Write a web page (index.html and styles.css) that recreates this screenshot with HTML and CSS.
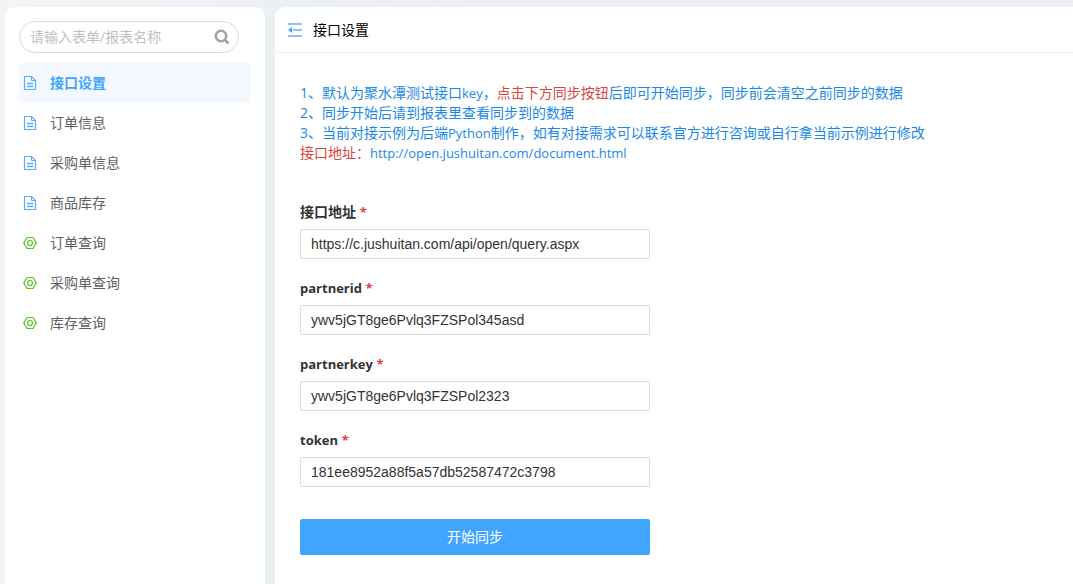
FILE: index.html
```html
<!DOCTYPE html>
<html lang="zh-CN">
  <head>
    <meta charset="UTF-8" />
    <meta name="viewport" content="width=device-width, initial-scale=1.0" />
    <title>接口设置</title>
    <link rel="stylesheet" href="styles.css">
  </head>
  <body>
    <svg class="sprite" aria-hidden="true">
      <symbol id="icon-form" viewBox="0 0 14 16">
        <path d="M1.5 1.5h7l4 4v9h-11z" fill="none" stroke="currentColor" stroke-width="1.2" />
        <path d="M8.5 1.5v4h4" fill="none" stroke="currentColor" />
        <path d="M4 8.5h6M4 11.5h6" stroke="currentColor" stroke-width="1.3" />
      </symbol>
      <symbol id="icon-report" viewBox="0 0 14 16">
        <path d="M4 2.5h6L13.3 8 10 13.5H4L.7 8z" fill="none" stroke="currentColor" stroke-width="1.2" />
        <circle cx="7" cy="8" r="2.5" fill="none" stroke="currentColor" stroke-width="1.2" />
      </symbol>
    </svg>

    <div class="layout">
      <aside class="sidebar">
        <form class="search">
          <input class="searchInput" type="text" placeholder="请输入表单/报表名称" aria-label="请输入表单/报表名称" />
          <button class="searchBtn" type="button" aria-label="搜索">
            <svg width="16" height="16" viewBox="0 0 16 16">
              <circle cx="7" cy="7" r="5.2" fill="none" stroke="currentColor" stroke-width="2.6" />
              <path d="M10.5 10.5l4 4" stroke="currentColor" stroke-width="2.8" />
            </svg>
          </button>
        </form>
        <nav class="menu">
          <a class="item active" href="#"><svg class="icon"><use href="#icon-form" /></svg>接口设置</a>
          <a class="item" href="#"><svg class="icon"><use href="#icon-form" /></svg>订单信息</a>
          <a class="item" href="#"><svg class="icon"><use href="#icon-form" /></svg>采购单信息</a>
          <a class="item" href="#"><svg class="icon"><use href="#icon-form" /></svg>商品库存</a>
          <a class="item report" href="#"><svg class="icon"><use href="#icon-report" /></svg>订单查询</a>
          <a class="item report" href="#"><svg class="icon"><use href="#icon-report" /></svg>采购单查询</a>
          <a class="item report" href="#"><svg class="icon"><use href="#icon-report" /></svg>库存查询</a>
        </nav>
      </aside>

      <main class="content">
        <header class="header">
          <button class="foldBtn" type="button" aria-label="收起菜单">
            <svg width="14" height="14" viewBox="0 0 14 14">
              <path d="M0 1h14M5 7h9M0 13h14" stroke="currentColor" stroke-width="2" />
              <path d="M0 7l4-3v6z" fill="#40a5ff" />
            </svg>
          </button>
          <h1 class="title">接口设置</h1>
        </header>

        <form class="form">
          <div class="tips">
            <p>1、默认为聚水潭测试接口<span class="latin">key</span>，<span class="red">点击下方同步按钮</span>后即可开始同步，同步前会清空之前同步的数据</p>
            <p>2、同步开始后请到报表里查看同步到的数据</p>
            <p>3、当前对接示例为后端<span class="latin">Python</span>制作，如有对接需求可以联系官方进行咨询或自行拿当前示例进行修改</p>
            <p><span class="red">接口地址：</span><a class="latin" href="#">http://open.jushuitan.com/document.html</a></p>
          </div>

          <div class="field">
            <label for="url">接口地址 <span class="red">*</span></label>
            <input id="url" type="text" value="https://c.jushuitan.com/api/open/query.aspx" />
          </div>
          <div class="field">
            <label for="partnerid"><span class="latin">partnerid</span> <span class="red">*</span></label>
            <input id="partnerid" type="text" value="ywv5jGT8ge6Pvlq3FZSPol345asd" />
          </div>
          <div class="field">
            <label for="partnerkey"><span class="latin">partnerkey</span> <span class="red">*</span></label>
            <input id="partnerkey" type="text" value="ywv5jGT8ge6Pvlq3FZSPol2323" />
          </div>
          <div class="field">
            <label for="token"><span class="latin">token</span> <span class="red">*</span></label>
            <input id="token" type="text" value="181ee8952a88f5a57db52587472c3798" />
          </div>
          <button class="submit" type="button">开始同步</button>
        </form>
      </main>
    </div>
  </body>
</html>
```
FILE: styles.css
```css
* {
  box-sizing: border-box;
}
body {
  margin: 0;
  font-family: "Open Sans", "Noto Sans CJK SC", sans-serif;
  font-size: 14px;
  line-height: 20px;
  color: #333;
  background: linear-gradient(90deg, #f3f4f6, #ebf0f5 25%, #ebeff3);
}
button {
  padding: 0;
  border: 0;
  background: none;
  font: inherit;
  cursor: pointer;
}
svg {
  display: block;
}
.sprite {
  position: absolute;
  width: 0;
  height: 0;
}
.red {
  color: #d9453d;
}
.latin {
  font-size: 13px;
  line-height: 1;
}
.layout {
  display: flex;
  gap: 10px;
  min-height: 100vh;
  padding: 7px 0 0 5px;
}
.sidebar {
  flex: 0 0 260px;
  padding: 14px;
  background: #fff;
  border-radius: 10px 10px 0 0;
}
.search {
  display: flex;
  align-items: center;
  width: 220px;
  height: 32px;
  padding: 0 8px 0 10px;
  border: 1px solid #dcdcdc;
  border-radius: 16px;
}
.searchInput {
  flex: 1;
  min-width: 0;
  padding: 0;
  border: 0;
  outline: 0;
  background: none;
  font: inherit;
}
.searchInput::placeholder {
  color: #bfbfbf;
}
.searchBtn {
  color: #a3a3a3;
}
.menu {
  margin-top: 10px;
}
.item {
  display: flex;
  align-items: center;
  gap: 13px;
  height: 40px;
  padding: 0 4px;
  border-radius: 4px;
  color: #606060;
  text-decoration: none;
}
.item.active {
  color: #40a5ff;
  font-weight: bold;
  background: #f4f9ff;
}
.icon {
  width: 14px;
  height: 16px;
  color: #5aabff;
}
.report .icon {
  color: #52c41a;
}
.content {
  flex: 1;
  min-width: 0;
  background: #fff;
  border-radius: 10px 0 0 0;
}
.header {
  display: flex;
  align-items: center;
  gap: 11px;
  height: 46px;
  padding: 0 13px;
  border-bottom: 1px solid #ebeef2;
}
.foldBtn {
  color: #8fc1ff;
}
.title {
  margin: 0;
  font-size: 14px;
  font-weight: normal;
  color: #000;
}
.form {
  padding: 30px 25px;
}
.tips {
  margin-bottom: 39px;
  color: #1c88e5;
}
.tips p {
  margin: 0;
}
.tips a {
  color: inherit;
  text-decoration: none;
}
.field {
  max-width: 350px;
  margin-bottom: 19px;
}
.field label {
  display: block;
  margin-bottom: 7px;
  font-weight: bold;
}
.field label .red {
  font-size: 13px;
  line-height: 1;
}
.field input {
  display: block;
  width: 100%;
  height: 30px;
  padding: 0 10px;
  border: 1px solid #dcdcdc;
  border-radius: 2px;
  font: 14px "Liberation Sans", Arial, sans-serif;
  color: #333;
}
.submit {
  width: 100%;
  max-width: 350px;
  height: 36px;
  margin-top: 13px;
  border-radius: 2px;
  color: #fff;
  background: #40a5ff;
}
```
